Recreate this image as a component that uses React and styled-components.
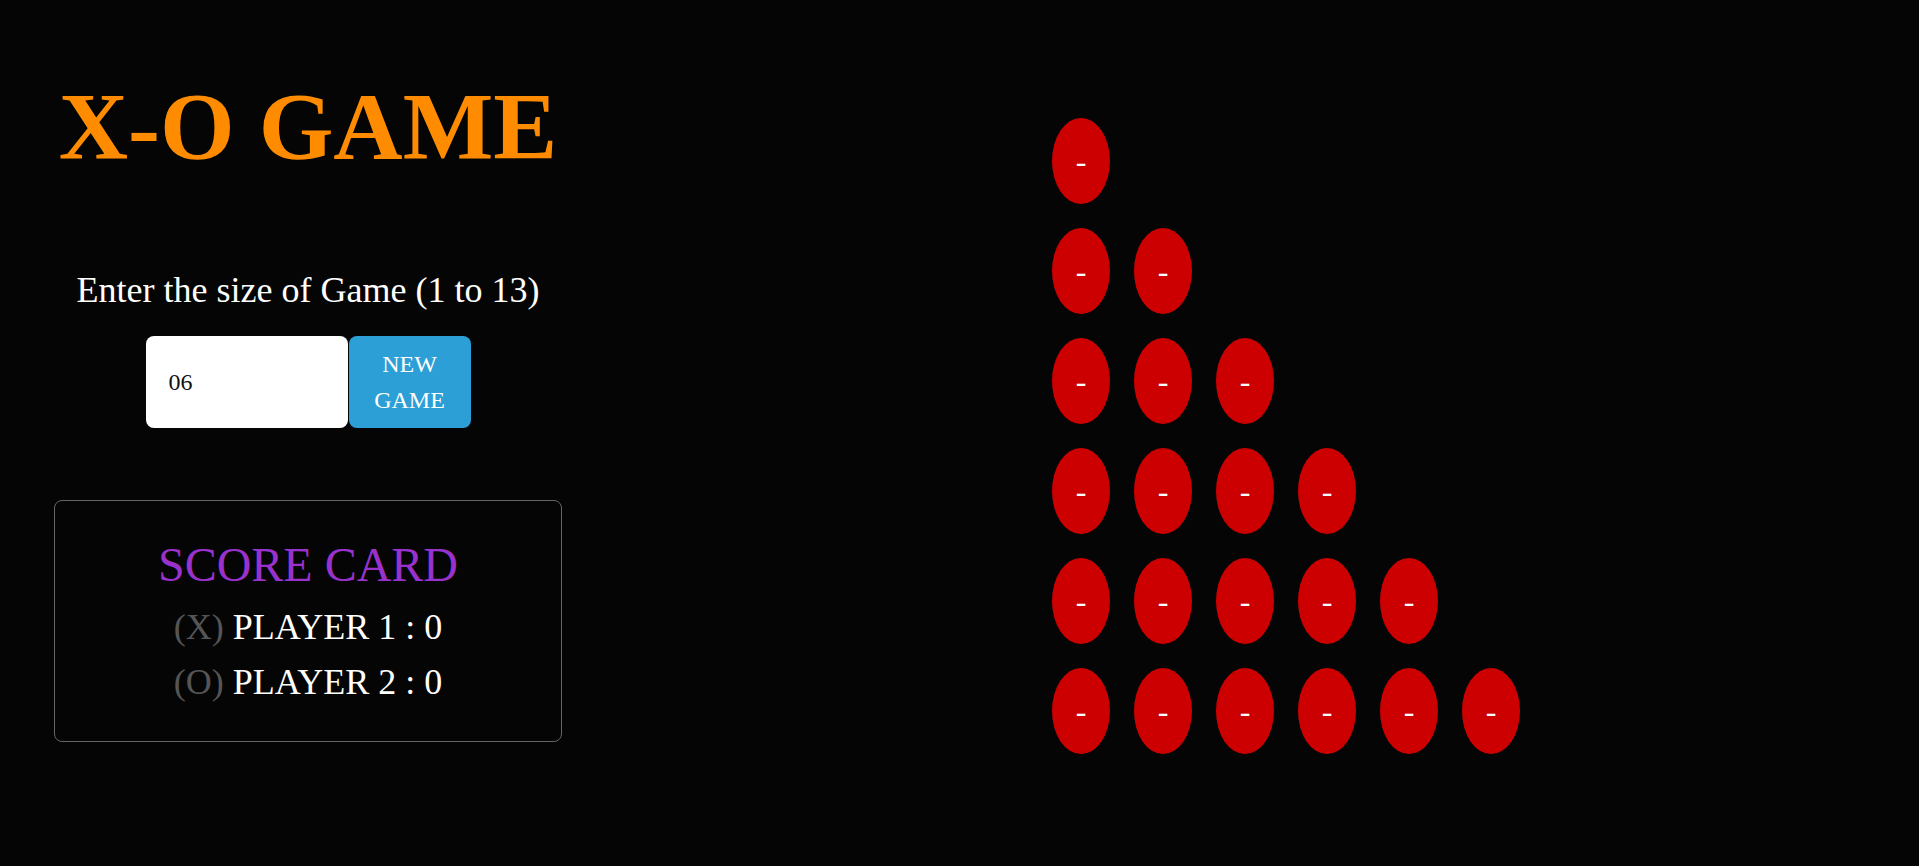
import React from "react";
import styled, { createGlobalStyle } from "styled-components";

const GlobalStyle = createGlobalStyle`
  html, body {
    margin: 0;
    padding: 0;
    background: #050505;
    font-family: "Liberation Serif", "Times New Roman", serif;
    color: #ffffff;
  }
  #root {
    min-height: 100vh;
  }
`;

const Page = styled.div`
  display: flex;
  flex-direction: row;
  align-items: flex-start;
  min-height: 866px;
  background: #050505;
`;

const LeftColumn = styled.div`
  width: 616px;
  flex: 0 0 616px;
  display: flex;
  flex-direction: column;
  align-items: center;
  padding-top: 79px;
`;

const Title = styled.h1`
  margin: 0;
  font-size: 96px;
  line-height: 96px;
  font-weight: 700;
  color: #ff8c00;
  white-space: nowrap;
`;

const SizeLabel = styled.div`
  margin-top: 97px;
  font-size: 36px;
  line-height: 36px;
  color: #ffffff;
  white-space: nowrap;
`;

const Controls = styled.div`
  margin-top: 28px;
  display: flex;
  flex-direction: row;
  gap: 1px;
`;

const SizeInput = styled.input`
  box-sizing: border-box;
  width: 202px;
  height: 92px;
  border: none;
  border-radius: 8px;
  background: #ffffff;
  padding: 0 0 0 23px;
  font-family: "Liberation Serif", "Times New Roman", serif;
  font-size: 24px;
  color: #111111;
  outline: none;
`;

const NewGameButton = styled.button`
  box-sizing: border-box;
  width: 122px;
  height: 92px;
  border: none;
  border-radius: 8px;
  background: #2c9fd6;
  color: #ffffff;
  font-family: "Liberation Serif", "Times New Roman", serif;
  font-size: 24px;
  line-height: 36px;
  padding: 10px 18px;
  text-align: center;
  cursor: pointer;
`;

const ScoreCard = styled.div`
  box-sizing: border-box;
  margin-top: 72px;
  width: 508px;
  height: 242px;
  border: 1px solid #666666;
  border-radius: 8px;
  display: flex;
  flex-direction: column;
  align-items: center;
  padding-top: 40px;
`;

const ScoreTitle = styled.div`
  font-size: 48px;
  line-height: 48px;
  color: #9932cc;
  white-space: nowrap;
`;

const PlayerRow = styled.div`
  font-size: 36px;
  line-height: 55px;
  color: #ffffff;
  white-space: nowrap;
  margin-top: ${(p) => (p.$first ? "11px" : "0")};
`;

const Mark = styled.span`
  color: #555555;
`;

const Board = styled.div`
  margin-left: 436px;
  padding-top: 118px;
  display: flex;
  flex-direction: column;
  gap: 24px;
`;

const BoardRow = styled.div`
  display: flex;
  flex-direction: row;
  gap: 24px;
`;

const Cell = styled.div`
  width: 58px;
  height: 86px;
  border-radius: 50%;
  background: #cc0000;
  color: #ffffff;
  font-size: 32px;
  display: flex;
  align-items: center;
  justify-content: center;
  cursor: pointer;
`;

export default function App() {
  const size = 6;
  const rows = Array.from({ length: size }, (_, i) => i + 1);
  return (
    <>
      <GlobalStyle />
      <Page>
        <LeftColumn>
          <Title>X-O GAME</Title>
          <SizeLabel>Enter the size of Game (1 to 13)</SizeLabel>
          <Controls>
            <SizeInput type="text" defaultValue="06" />
            <NewGameButton>NEW GAME</NewGameButton>
          </Controls>
          <ScoreCard>
            <ScoreTitle>SCORE CARD</ScoreTitle>
            <PlayerRow $first>
              <Mark>(X)</Mark> PLAYER 1 : 0
            </PlayerRow>
            <PlayerRow>
              <Mark>(O)</Mark> PLAYER 2 : 0
            </PlayerRow>
          </ScoreCard>
        </LeftColumn>
        <Board>
          {rows.map((r) => (
            <BoardRow key={r}>
              {Array.from({ length: r }, (_, c) => (
                <Cell key={c}>-</Cell>
              ))}
            </BoardRow>
          ))}
        </Board>
      </Page>
    </>
  );
}
